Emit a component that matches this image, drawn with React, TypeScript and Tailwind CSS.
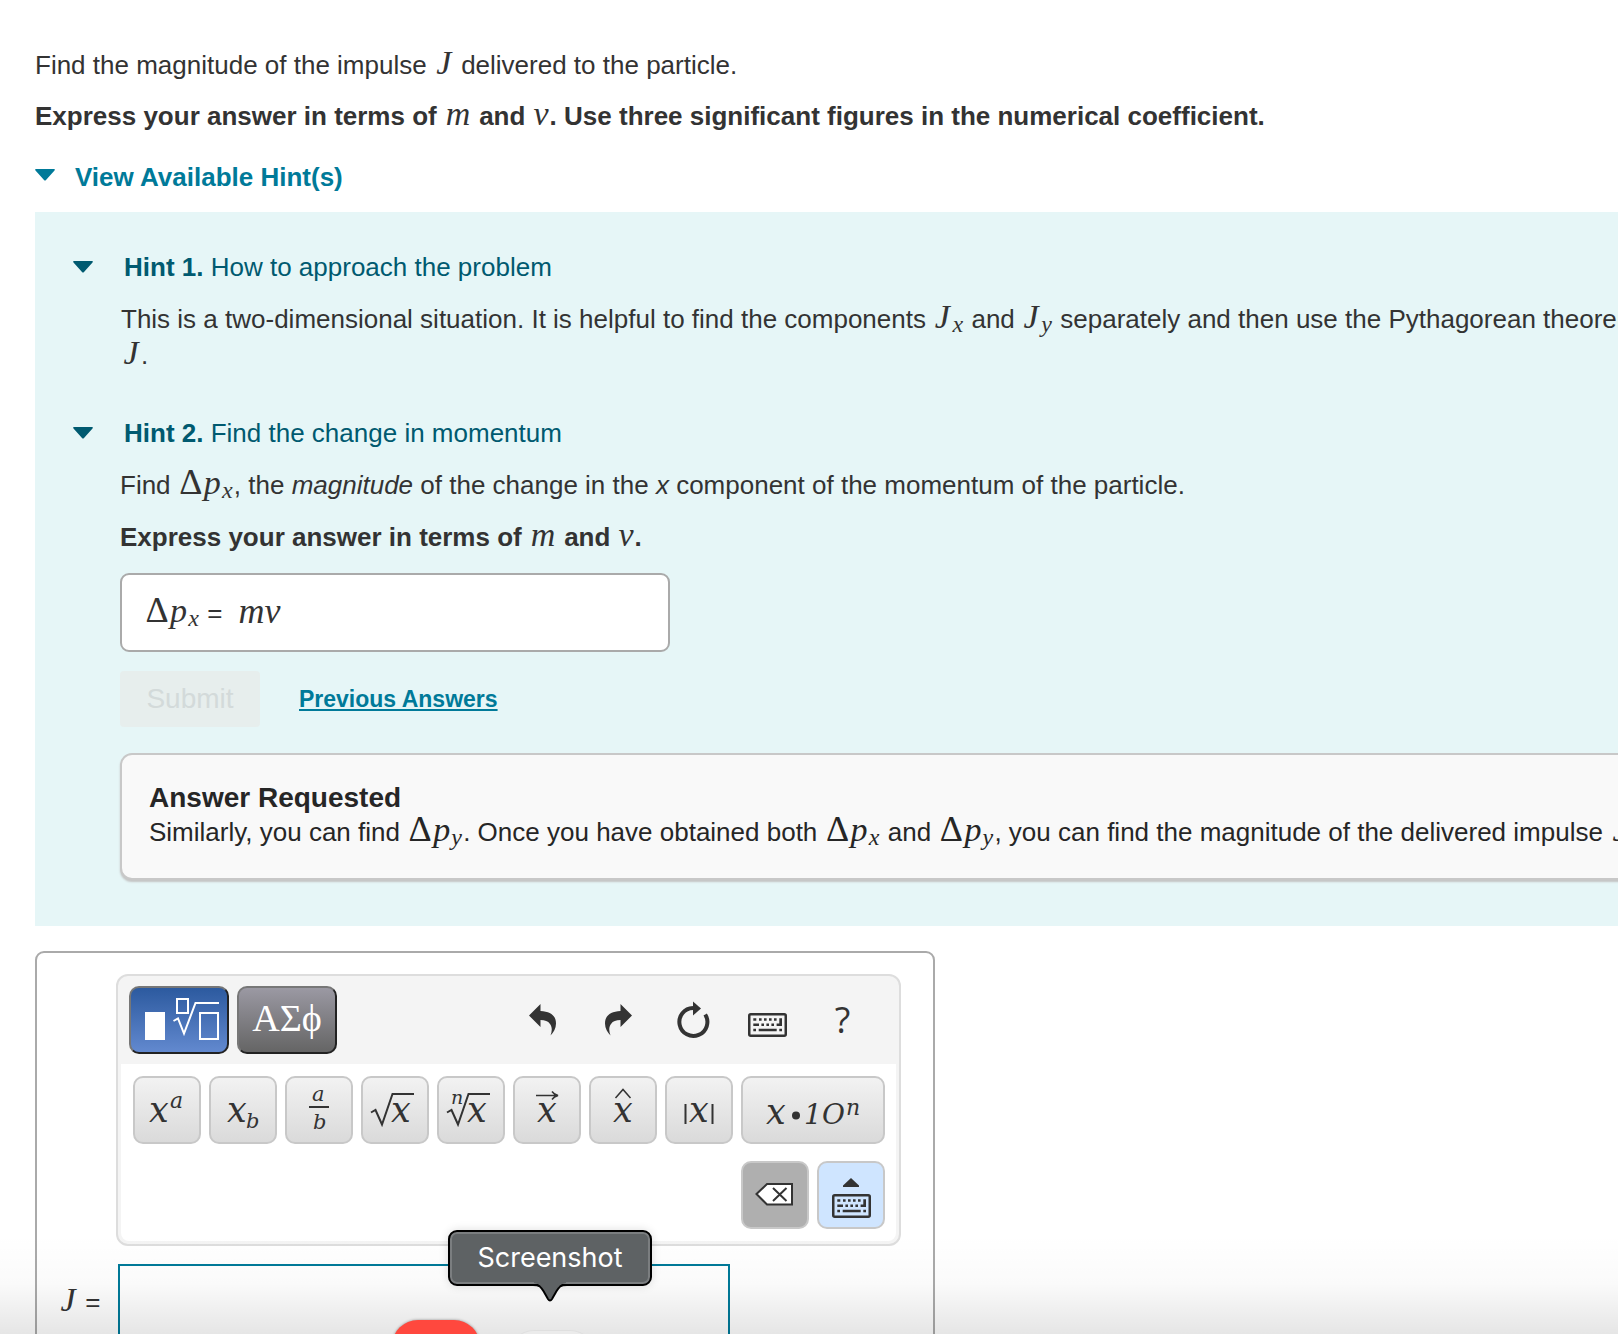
import React from "react";

type Kids = { children: React.ReactNode };

const MATH = "inline-block text-center font-['Liberation_Serif',serif] italic font-normal";

const J = () => <i className={`${MATH} w-[20px] text-[34px] leading-[28px]`}>J</i>;
const Em = () => <i className={`${MATH} w-[28px] text-[34px] leading-[28px]`}>m</i>;
const Vee = () => <i className={`${MATH} w-[17px] text-[34px] leading-[28px]`}>v</i>;
const Sub = ({ children }: Kids) => (
  <sub className={`${MATH} bottom-0 w-[13px] align-[-4px] text-[24px] leading-[16px]`}>{children}</sub>
);
const JSub = ({ of }: { of: string }) => (
  <span className="whitespace-nowrap">
    <i className={`${MATH} w-[18px] text-[34px] leading-[28px]`}>J</i>
    <Sub>{of}</Sub>
  </span>
);
const DeltaP = ({ of }: { of: string }) => (
  <span className="whitespace-nowrap">
    <span className="inline-block w-[26px] text-center font-['Liberation_Serif',serif] text-[36px] font-normal leading-[28px]">
      Δ
    </span>
    <i className={`${MATH} w-[17px] text-[34px] leading-[28px]`}>p</i>
    <Sub>{of}</Sub>
  </span>
);

const Triangle = () => (
  <svg width="20" height="12" viewBox="0 0 20 12" fill="currentColor" aria-hidden="true">
    <path d="M1 0h18q1.500 .5 .5 1.500L11 11q-1 1-2 0L.5 1.500Q-.5 .5 1 0z" />
  </svg>
);

const HintHead = ({ n, title }: { n: number; title: string }) => (
  <button
    type="button"
    aria-expanded="true"
    className="flex items-center pl-[38px] text-left leading-[36px] text-[#005a70]"
  >
    <Triangle />
    <span className="ml-[31px]">
      <b>Hint {n}.</b> {title}
    </span>
  </button>
);

const KeyboardGlyph = () => (
  <g fill="#333">
    <rect x="1.250" y="1.250" width="36.500" height="21.500" rx="1.500" fill="none" stroke="#333" strokeWidth="2.500" />
    <path d="M5.300 5.300h3v2.500h-3zM11 5.300h2.600v2.500H11zM16 5.300h2.600v2.500H16zM21 5.300h2.600v2.500H21zM26 5.300h2.600v2.500H26zM31.300 5.300H34V13h-5.400v-2.600h2.700z" />
    <path d="M5.300 10.400H11V13H5.300zM13.400 10.400H16V13h-2.600zM18.400 10.400H21V13h-2.600zM23.400 10.400H26V13h-2.600z" />
    <path d="M5.300 15.700H8v2.500H5.300zM10.700 15.700h18v2.500h-18zM31.300 15.700H34v2.500h-2.700z" />
  </g>
);

const ToolButton = ({ label, children }: Kids & { label: string }) => (
  <button type="button" aria-label={label} className="flex h-[68px] w-[75px] items-center justify-center text-[#333]">
    {children}
  </button>
);

const Key = ({ label, wide, children }: Kids & { label: string; wide?: boolean }) => (
  <button
    type="button"
    aria-label={label}
    className={`h-[68px] rounded-[10px] border-2 border-[#c8c8c8] bg-linear-to-b from-[#f2f2f2] to-[#dadada] ${
      wide ? "w-[144px]" : "w-[68px]"
    }`}
  >
    <svg
      className="block font-['DejaVu_Serif',serif] italic"
      width={wide ? 140 : 64}
      height="64"
      fill="#333"
      stroke="none"
    >
      {children}
    </svg>
  </button>
);

const X = ({ x, y = 44 }: { x: number; y?: number }) => (
  <text x={x} y={y} fontSize="35" stroke="none">
    x
  </text>
);

const Radical = () => (
  <path d="M8 34.500l4.500-2.500 6.500 14.500L29.500 16H51" fill="none" stroke="#333" strokeWidth="2" />
);

function Toolbar() {
  return (
    <div className="w-[785px] rounded-[12px] border-2 border-[#ddd] bg-[#f4f4f4] px-[3px] pb-[3px]">
      <div className="flex h-[88px] items-center gap-2 px-2">
        <button
          type="button"
          aria-label="Templates"
          className="h-[68px] w-[100px] rounded-[10px] border-2 border-t-[#777] border-r-[#222] border-b-[#222] border-l-[#777] bg-linear-to-b from-[#2c5a9f] to-[#6289cf]"
        >
          <svg width="96" height="64" fill="none" stroke="#fff" strokeWidth="2" className="block">
            <path d="M14 24h20v28H14z" fill="#fff" stroke="none" />
            <path d="M46 11h11v14H46z" strokeWidth="2" />
            <path d="M42.500 33l4.500-2.500 6 15L64.500 15H88" />
            <path d="M69 25h18v26H69z" />
          </svg>
        </button>
        <button
          type="button"
          className="h-[68px] w-[100px] rounded-[10px] border-2 border-t-[#777] border-r-[#222] border-b-[#222] border-l-[#777] bg-linear-to-b from-[#9b99a3] to-[#656565] pb-1 font-['Liberation_Serif',serif] text-[38px] leading-none text-white"
        >
          ΑΣϕ
        </button>
        <div className="ml-auto flex pr-2">
          <ToolButton label="Undo">
            <svg width="28" height="32" fill="currentColor">
              <path d="M0 11.500L11.500 0v7C22 7.500 27 12 27 19.500c0 5-2.500 9-5.500 12 1.500-4 2-8-.5-11.500-2-3-5-4-9.500-4V23z" />
            </svg>
          </ToolButton>
          <ToolButton label="Redo">
            <svg width="28" height="32" fill="currentColor">
              <path d="M28 11.500L16.500 0v7C6 7.500 1 12 1 19.500c0 5 2.500 9 5.500 12-1.500-4-2-8 .5-11.500 2-3 5-4 9.500-4V23z" />
            </svg>
          </ToolButton>
          <ToolButton label="Reset">
            <svg width="34" height="38" viewBox="-17 -21 34 38">
              <path d="M12.200-7.500A14 14 0 1 1 0-14" fill="none" stroke="currentColor" strokeWidth="4" />
              <path d="M0-20.500l8 7-8 7z" fill="currentColor" />
            </svg>
          </ToolButton>
          <ToolButton label="Keyboard shortcuts">
            <svg width="39" height="34" viewBox="0 -10 39 34">
              <KeyboardGlyph />
            </svg>
          </ToolButton>
          <ToolButton label="Help">
            <span className="font-['Open_Sans',sans-serif] text-[36px] leading-none">?</span>
          </ToolButton>
        </div>
      </div>
      <div className="rounded-b-[8px] bg-white px-3 py-3 pr-[11px]">
        <div className="flex gap-2">
          <Key label="Superscript">
            <X x={14} />
            <text x="35" y="30" fontSize="22">a</text>
          </Key>
          <Key label="Subscript">
            <X x={16} />
            <text x="35" y="50" fontSize="21">b</text>
          </Key>
          <Key label="Fraction">
            <text x="25" y="23" fontSize="21">a</text>
            <rect x="22" y="28" width="20" height="2" />
            <text x="26" y="51" fontSize="21">b</text>
          </Key>
          <Key label="Square root">
            <Radical />
            <X x={28} />
          </Key>
          <Key label="Nth root">
            <Radical />
            <text x="12" y="26" fontSize="19">n</text>
            <X x={28} />
          </Key>
          <Key label="Vector">
            <path d="M21 17.500h21M37 13.500q2 3 6 4-4 1-6 4" fill="none" stroke="#333" strokeWidth="1.500" />
            <X x={22} />
          </Key>
          <Key label="Unit vector">
            <path d="M24.500 20l7.500-8.500 7.500 8.500" fill="none" stroke="#333" strokeWidth="1.500" />
            <X x={22} />
          </Key>
          <Key label="Absolute value">
            <path d="M18.500 26v20M45.500 26v20" stroke="#333" strokeWidth="2" />
            <X x={22} />
          </Key>
          <Key label="Scientific notation" wide>
            <X x={23} y={46} />
            <circle cx="53" cy="37.500" r="4" />
            <text x="61" y="46" fontSize="28">1</text>
            <text x="79" y="46" fontSize="28">O</text>
            <text x="103" y="37" fontSize="22">n</text>
          </Key>
        </div>
        <div className="mt-[17px] flex justify-end gap-2">
          <button
            type="button"
            aria-label="Backspace"
            className="h-[68px] w-[68px] rounded-[10px] border-2 border-[#c8c8c8] bg-[#afafaf]"
          >
            <svg width="64" height="64" className="block" fill="none" stroke="#333" strokeWidth="2">
              <path d="M13.500 31L24 21h25v20.500H24z" fill="#fff" />
              <path d="M30 25l13.500 13M43.500 25L30 38" />
            </svg>
          </button>
          <button
            type="button"
            aria-label="Hide keyboard"
            className="h-[68px] w-[68px] rounded-[10px] border-2 border-[#c8c8c8] bg-[#cfe5ff]"
          >
            <svg width="64" height="64" className="block">
              <path d="M32 15l8 7.500V24H24v-1.500z" fill="#333" />
              <g transform="translate(13 31)">
                <KeyboardGlyph />
              </g>
            </svg>
          </button>
        </div>
      </div>
    </div>
  );
}

export default function App() {
  return (
    <main className="relative h-screen overflow-hidden bg-white pt-[47px] pl-[35px] font-['Liberation_Sans',Arial,sans-serif] text-[26px] leading-[36px] text-[#333]">
      <p>
        Find the magnitude of the impulse <J /> delivered to the particle.
      </p>
      <p className="mt-[15px] font-bold">
        Express your answer in terms of <Em /> and <Vee />. Use three significant figures in the numerical
        coefficient.
      </p>
      <button
        type="button"
        aria-expanded="true"
        className="mt-[25px] flex items-center font-bold leading-[36px] text-[#007a99]"
      >
        <span className="pb-1">
          <Triangle />
        </span>
        <span className="ml-5">View Available Hint(s)</span>
      </button>

      <section className="mt-[17px] overflow-hidden bg-[#e6f6f7] pt-[37px] pb-[46px]">
        <HintHead n={1} title="How to approach the problem" />
        <p className="mt-4 pl-[86px] whitespace-nowrap">
          This is a two-dimensional situation. It is helpful to find the components <JSub of="x" /> and{" "}
          <JSub of="y" /> separately and then use the Pythagorean theorem to find
          <br />
          <J />.
        </p>

        <div className="mt-[42px]">
          <HintHead n={2} title="Find the change in momentum" />
        </div>
        <div className="pl-[85px]">
          <p className="mt-4">
            Find <DeltaP of="x" />, the <em>magnitude</em> of the change in the <em>x</em> component of the momentum of
            the particle.
          </p>
          <p className="mt-4 font-bold">
            Express your answer in terms of <Em /> and <Vee />.
          </p>
          <div className="mt-[18px] flex h-[79px] w-[550px] items-center rounded-[9px] border-2 border-[#aaa] bg-white px-[22px]">
            <label htmlFor="delta-px" className="shrink-0 whitespace-nowrap">
              <DeltaP of="x" /> =
            </label>
            <input
              id="delta-px"
              readOnly
              defaultValue="mv"
              className="ml-4 h-[36px] min-w-0 flex-1 bg-transparent pb-1 font-['Liberation_Serif',serif] text-[36px] leading-[36px] italic outline-none"
            />
          </div>
          <div className="mt-[19px] flex items-center">
            <button type="button" disabled className="h-[56px] w-[140px] rounded-[4px] bg-[#e7eeed] text-[28px] text-[#d3dada]">
              Submit
            </button>
            <a
              href="#previous"
              className="ml-[39px] text-[23px] font-bold text-[#007a99] underline decoration-2 underline-offset-2"
            >
              Previous Answers
            </a>
          </div>
          <div className="-mr-5 mt-[26px] rounded-[12px] border-2 border-[#c8c8c8] bg-[#f9f9f9] px-[27px] pt-[27px] pb-[28px] whitespace-nowrap text-[#262626] shadow-[0_2px_2px_#c4c4c4]">
            <h3 className="text-[28px] leading-[32px] font-bold">Answer Requested</h3>
            <p>
              Similarly, you can find <DeltaP of="y" />. Once you have obtained both <DeltaP of="x" /> and{" "}
              <DeltaP of="y" />, you can find the magnitude of the delivered impulse <J />
            </p>
          </div>
        </div>
      </section>

      <section className="mt-[25px] w-[900px] rounded-[9px] border-2 border-[#aaa] pt-[21px] pb-10">
        <div className="pl-[79px]">
          <Toolbar />
        </div>
        <div className="mt-[18px] flex">
          <label htmlFor="impulse" className="w-[81px] shrink-0 pt-[20px] pl-[21px] whitespace-nowrap">
            <J /> =
          </label>
          <input id="impulse" className="h-[90px] w-[612px] border-2 border-[#007a99] bg-transparent px-3 outline-none" />
        </div>
      </section>

      <div className="pointer-events-none absolute inset-x-0 bottom-0 h-[100px] bg-linear-to-b from-transparent via-black/2 to-black/10" />
      <div className="absolute -bottom-[74px] left-[392px] h-[88px] w-[88px] rounded-[26px] bg-[#ff483e] shadow-[0_0_3px_#0006]" />
      <div className="absolute -bottom-[84px] left-[508px] h-[88px] w-[88px] rounded-[26px] border border-black/5 bg-white/20" />
      <div className="absolute bottom-[32px] left-[448px] flex flex-col items-center" role="tooltip">
        <div className="flex h-[56px] w-[204px] items-center justify-center rounded-[9px] border-2 border-black bg-[#5e6264] font-['Inter',sans-serif] text-[27px] text-white shadow-[inset_0_0_0_2px_#7b7e80,0_0_10px_#0002]">
          Screenshot
        </div>
        <svg width="36" height="20" viewBox="0 0 36 20" className="relative -mt-1">
          <path d="M2 0v1C8 2 9 4 12 10l4 6q2 4 4 0l4-6C27 4 28 2 34 1V0z" fill="#5e6264" />
          <path
            d="M1 3C8 3 9 5 12 10l4 7q2 3 4 0l4-7C27 5 28 3 35 3"
            fill="none"
            stroke="#000"
            strokeWidth="2"
          />
        </svg>
      </div>
    </main>
  );
}
